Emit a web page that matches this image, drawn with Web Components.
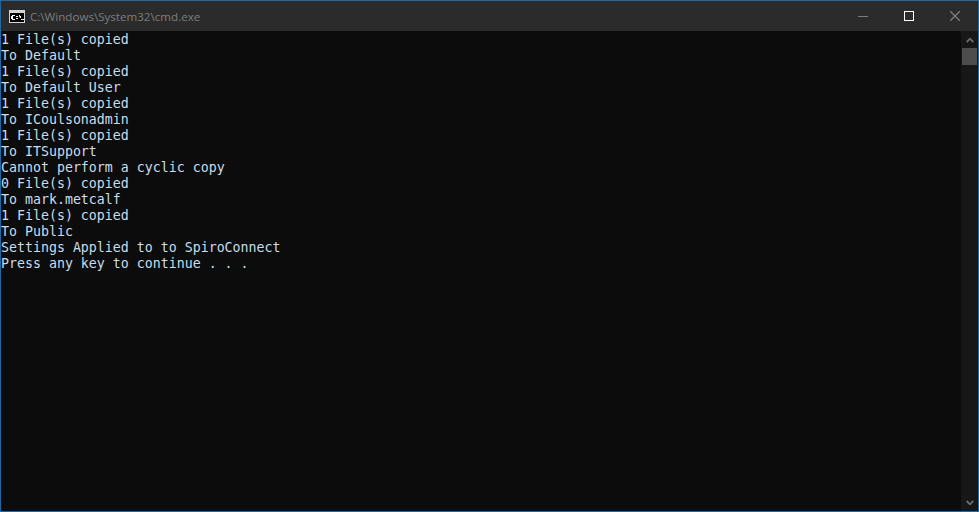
<!DOCTYPE html>
<html lang="en">
<head>
<meta charset="UTF-8">
<title>cmd.exe</title>
<style>
  html, body { margin: 0; height: 100%; background: #0c0c0c; overflow: hidden; }
</style>
</head>
<body>
<console-window title-text="C:\Windows\System32\cmd.exe">1 File(s) copied
To Default
1 File(s) copied
To Default User
1 File(s) copied
To ICoulsonadmin
1 File(s) copied
To ITSupport
Cannot perform a cyclic copy
0 File(s) copied
To mark.metcalf
1 File(s) copied
To Public
Settings Applied to to SpiroConnect
Press any key to continue . . .</console-window>

<script>
  class TitleBar extends HTMLElement {
    static get observedAttributes() { return ['text']; }

    constructor() {
      super();
      this.attachShadow({ mode: 'open' });
      this.shadowRoot.innerHTML = `
        <style>
          :host { display: flex; align-items: center; height: 30px; background: #2b2b2b; flex: none; }
          .icon { width: 16px; height: 13px; margin: 0 5px 0 8px; flex: none; display: block; }
          .text { font: 11.6px "Open Sans", "Noto Sans", sans-serif; color: #7d7d7d; flex: 1; white-space: nowrap; }
          .btn { width: 46px; height: 30px; display: flex; align-items: center; justify-content: center; flex: none; }
          svg { display: block; }
        </style>
        <svg class="icon" viewBox="0 0 16 13">
          <rect x="0.5" y="0.5" width="15" height="12" fill="#000" stroke="#d4d4d4"/>
          <rect x="1" y="1" width="14" height="2" fill="#d4d4d4"/>
          <path d="M3 5h3v1H3zM2 6h2v3H2zM3 9h3v1H3zM7 6h2v1H7zM7 8h2v1H7zM10 5h1v1h-1zM10 6h2v2h-1zM12 9h3v1h-3z" fill="#fff"/>
        </svg>
        <span class="text"></span>
        <div class="btn"><svg width="10" height="10" viewBox="0 0 10 10"><path d="M0 5.5h10" stroke="#7d7d7d" fill="none"/></svg></div>
        <div class="btn"><svg width="10" height="10" viewBox="0 0 10 10"><rect x="0.5" y="0.5" width="9" height="9" stroke="#fff" fill="none"/></svg></div>
        <div class="btn"><svg width="10" height="10" viewBox="0 0 10 10"><path d="M0 0l10 10M10 0L0 10" stroke="#7d7d7d" stroke-width="1.3" fill="none"/></svg></div>
      `;
    }

    attributeChangedCallback(name, oldValue, value) {
      this.shadowRoot.querySelector('.text').textContent = value;
    }
  }

  class ScrollTrack extends HTMLElement {
    constructor() {
      super();
      this.attachShadow({ mode: 'open' });
      this.shadowRoot.innerHTML = `
        <style>
          :host { display: flex; flex-direction: column; width: 17px; background: #171717; flex: none; align-items: center; }
          .arrow { height: 17px; display: flex; align-items: center; justify-content: center; flex: none; }
          .thumb { width: 15px; height: 17px; background: #4d4d4d; flex: none; }
          .rest { flex: 1; }
          svg { display: block; }
        </style>
        <div class="arrow"><svg width="8" height="6" viewBox="0 0 8 6"><path d="M0.7 5L4 1.7 7.3 5" stroke="#6e6e6e" stroke-width="1.8" fill="none"/></svg></div>
        <div class="thumb"></div>
        <div class="rest"></div>
        <div class="arrow"><svg width="8" height="6" viewBox="0 0 8 6"><path d="M0.7 1L4 4.3 7.3 1" stroke="#6e6e6e" stroke-width="1.8" fill="none"/></svg></div>
      `;
    }
  }

  class ConsoleWindow extends HTMLElement {
    constructor() {
      super();
      this.attachShadow({ mode: 'open' });
      this.shadowRoot.innerHTML = `
        <style>
          :host { display: flex; flex-direction: column; box-sizing: border-box; width: 979px; height: 512px; border: 1px solid #1b6aa5; background: #0c0c0c; }
          .body { flex: 1; display: flex; min-height: 0; }
          pre { flex: 1; margin: 0; padding: 1px 0 0; font: 13.28px/16px "DejaVu Sans Mono", monospace; color: #c9dcec; white-space: pre; overflow: hidden; }
        </style>
        <title-bar></title-bar>
        <div class="body">
          <pre><slot></slot></pre>
          <scroll-track></scroll-track>
        </div>
      `;
      this.shadowRoot.querySelector('title-bar').setAttribute('text', this.getAttribute('title-text'));
    }
  }

  customElements.define('title-bar', TitleBar);
  customElements.define('scroll-track', ScrollTrack);
  customElements.define('console-window', ConsoleWindow);
</script>
</body>
</html>
